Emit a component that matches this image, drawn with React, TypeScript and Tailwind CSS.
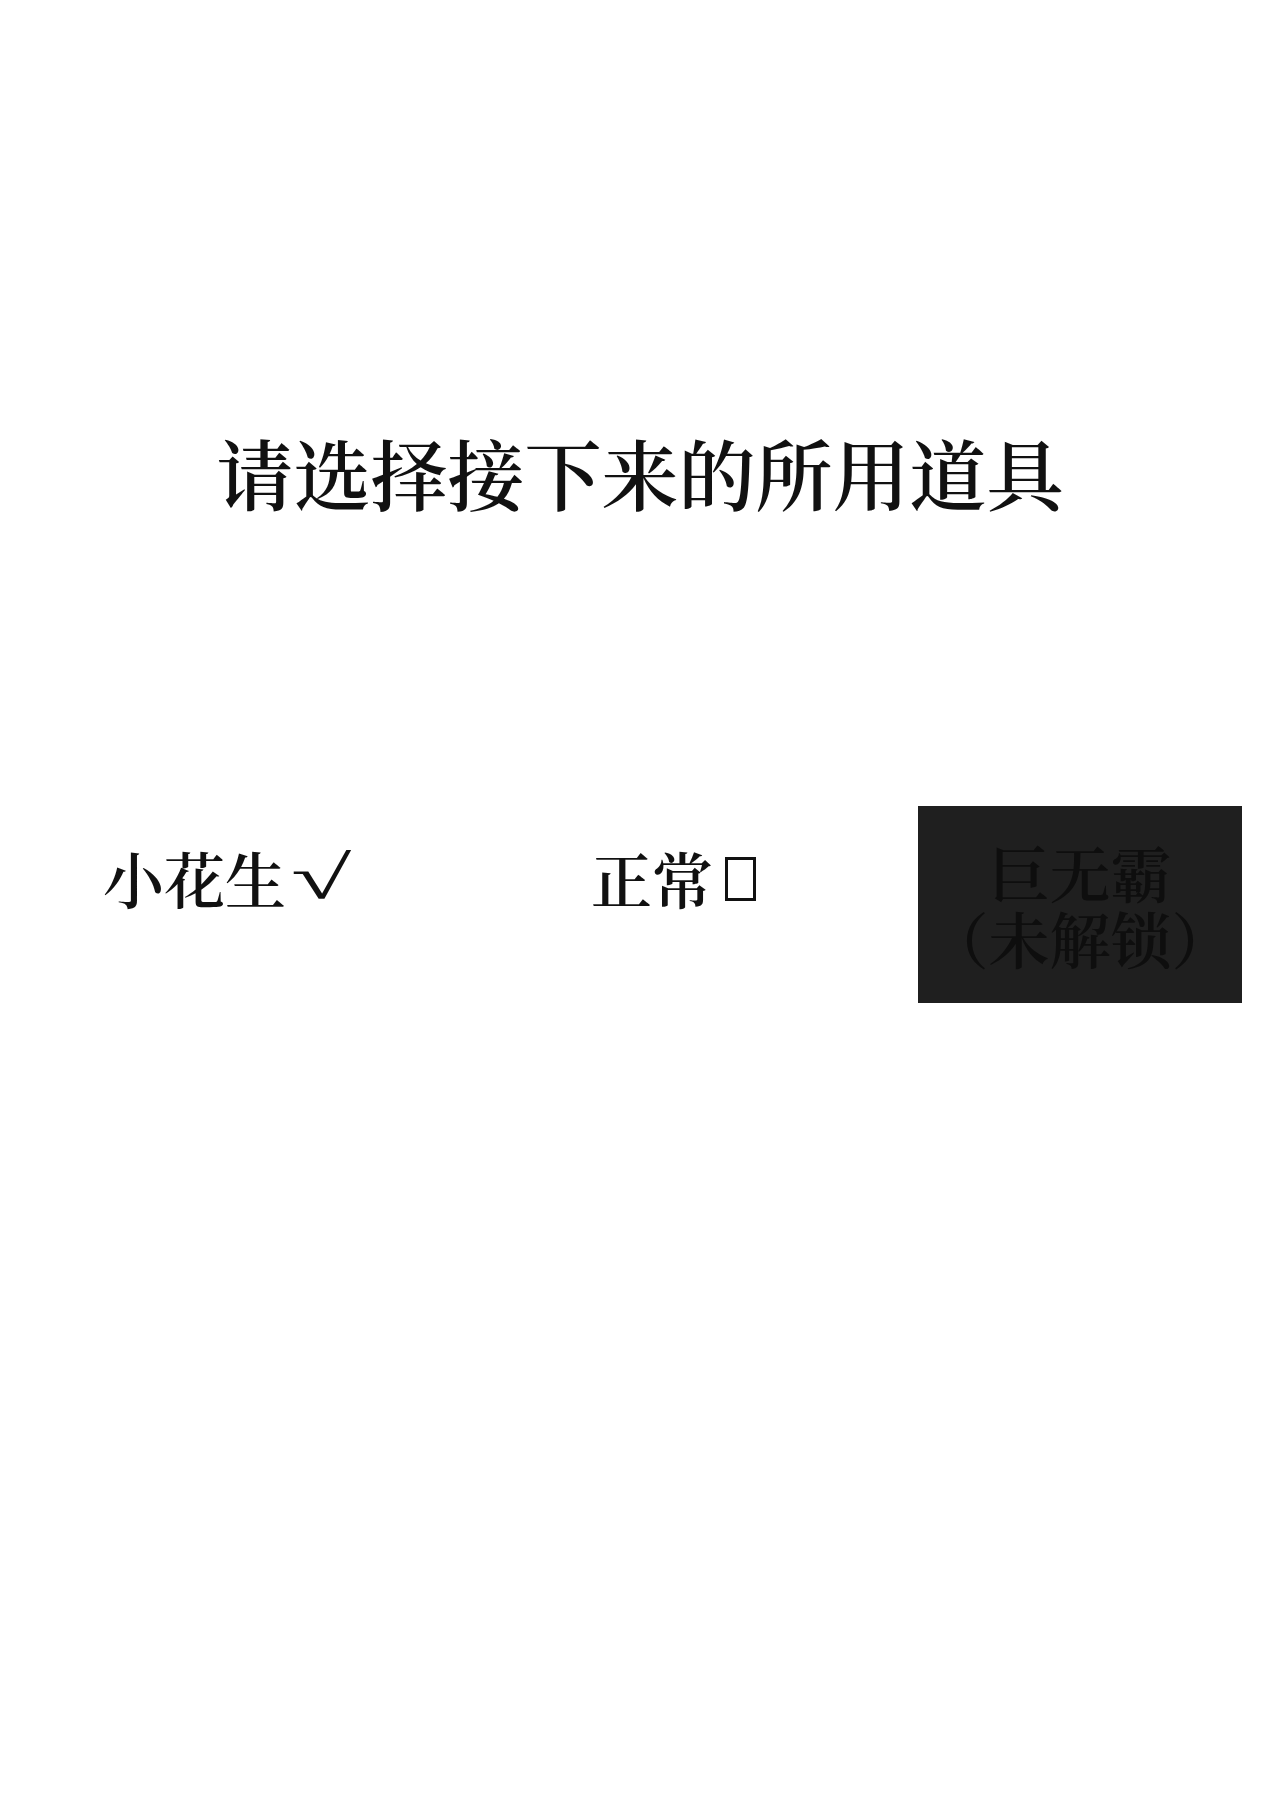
export default function App() {
  const font = { fontFamily: '"Noto Serif CJK SC", "Liberation Serif", "Noto Sans CJK SC", serif' }
  return (
    <div className="w-[1280px] h-[1811px] bg-white text-[#111]" style={font}>
      {/* 标题 */}
      <h1 className="pt-[432px] text-center text-[77px] leading-[80px] font-semibold">
        请选择接下来的所用道具
      </h1>

      {/* 道具选项 */}
      <div className="mt-[294px] flex items-start pl-[103px]">
        <button className="w-[488px] pt-[38px] text-left text-[61px] leading-[68px] font-semibold flex items-center">
          小花生
          <span className="inline-block ml-[5px] origin-left scale-x-[1.8] font-normal" style={{ fontFamily: '"Liberation Serif", serif' }}>
            √
          </span>
        </button>
        <button className="w-[327px] pt-[38px] text-left text-[61px] leading-[68px] font-semibold flex items-center">
          正常
          <span className="inline-block w-[31px] h-[44px] border-[3px] border-[#111] ml-[12px] mt-[2px]" />
        </button>
        <button className="w-[324px] h-[197px] bg-[#1f1f1f] text-[#0e0e0e] text-[61px] leading-[66px] font-semibold flex flex-col items-center justify-center">
          <span>巨无霸</span>
          <span>（未解锁）</span>
        </button>
      </div>
    </div>
  )
}
